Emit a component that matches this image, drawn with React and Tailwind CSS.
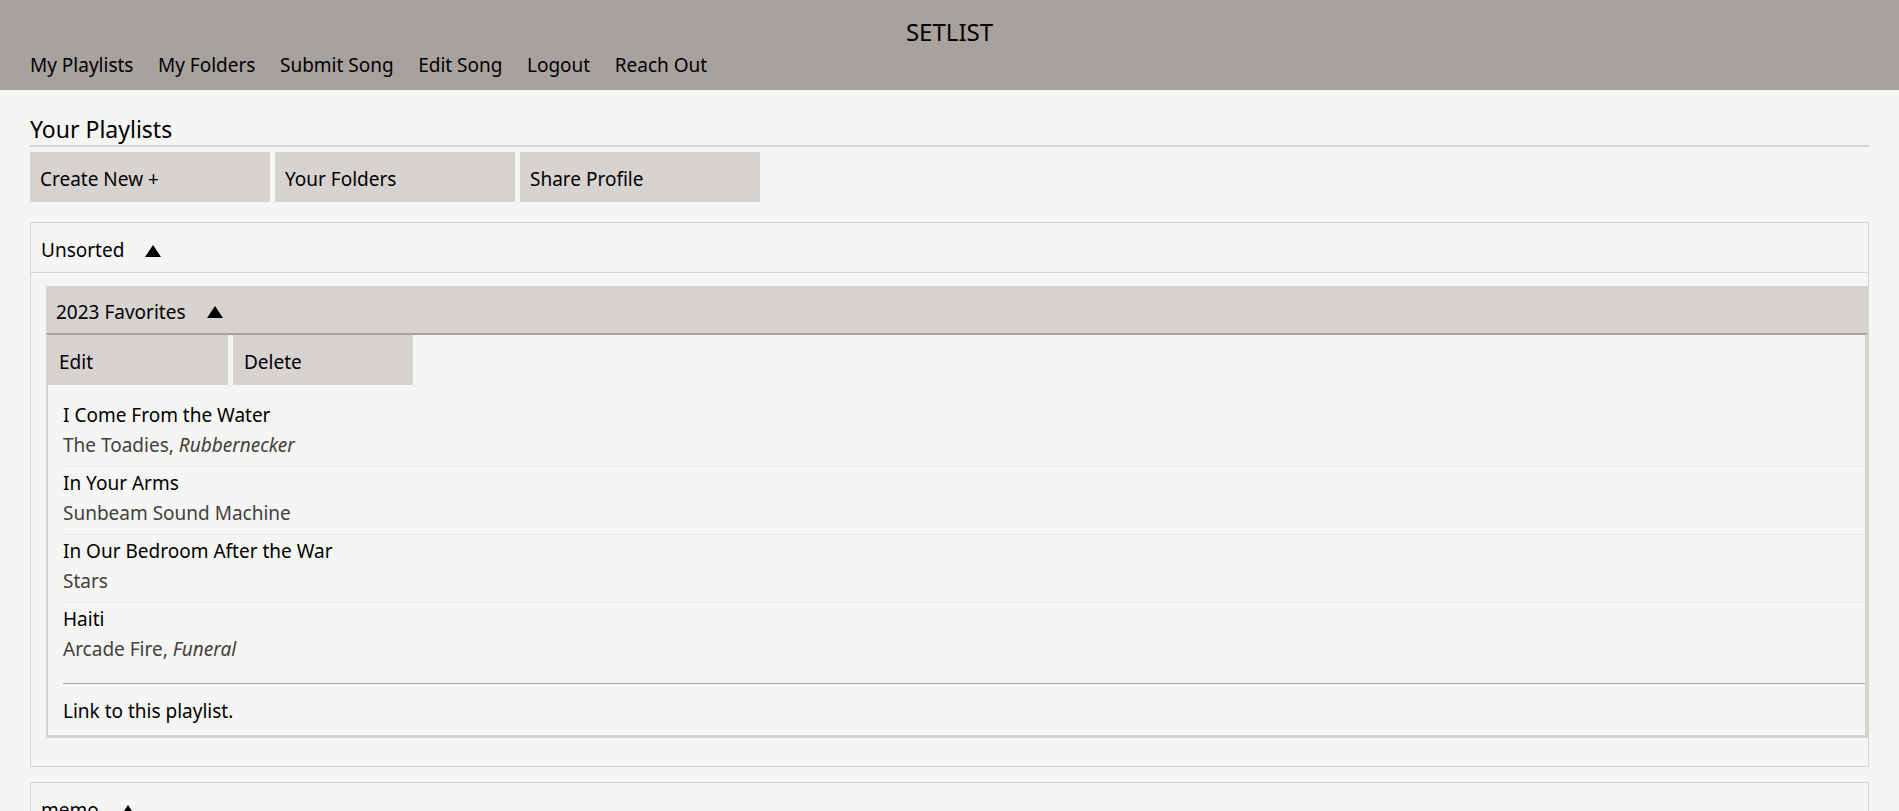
import React from 'react';

const songs = [
    { title: 'I Come From the Water', artist: 'The Toadies', album: 'Rubbernecker' },
    { title: 'In Your Arms', artist: 'Sunbeam Sound Machine' },
    { title: 'In Our Bedroom After the War', artist: 'Stars' },
    { title: 'Haiti', artist: 'Arcade Fire', album: 'Funeral' },
];

const navLinks = ['My Playlists', 'My Folders', 'Submit Song', 'Edit Song', 'Logout', 'Reach Out'];

const Arrow = () => (
    <svg width="16" height="12" viewBox="0 0 16 12" className="ml-[21px] shrink-0">
        <polygon points="8,0 16,12 0,12" fill="#000" />
    </svg>
);

const SongRow = ({ song, last }) => (
    <li className={`pt-[1px] pb-[6px] ${last ? '' : 'border-b border-[#e5e7eb]'}`}>
        <div className="leading-[30px] text-black">{song.title}</div>
        <div className="leading-[30px] text-[#44403c]">
            {song.artist}
            {song.album && (
                <>
                    , <i>{song.album}</i>
                </>
            )}
        </div>
    </li>
);

const Playlist = () => (
    <div>
        <div className="flex items-center h-[47px] pl-[10px] pt-[5px] bg-[#d6d3d1]">
            <span>2023 Favorites</span>
            <Arrow />
        </div>
        <div className="border-t-2 border-t-[#a8a29e] border-l-2 border-r-[3px] border-b-[3px] border-l-[#d6d3d1] border-r-[#d6d3d1] border-b-[#d6d3d1]">
            <div className="flex gap-[5px]">
                <button className="w-[180px] h-[50px] pl-[11px] pt-[4px] text-left bg-[#d6d3d1]">Edit</button>
                <button className="w-[180px] h-[50px] pl-[11px] pt-[4px] text-left bg-[#d6d3d1]">Delete</button>
            </div>
            <ul className="ml-[15px] pt-[14px] pb-[13px]">
                {songs.map((s, i) => (
                    <SongRow key={s.title} song={s} last={i === songs.length - 1} />
                ))}
            </ul>
            <div className="ml-[15px] border-t border-[#a8a29e] pt-[12px] pb-[9px] leading-[30px]">
                Link to this playlist.
            </div>
        </div>
    </div>
);

const Folder = ({ name, children }) => (
    <section className="border border-[#d6d3d1]">
        <div className="flex items-center h-[50px] pl-[10px] pt-[6px] border-b border-[#d6d3d1]">
            <span>{name}</span>
            <Arrow />
        </div>
        {children && <div className="pl-[15px] pt-[13px] pb-[28px]">{children}</div>}
    </section>
);

export default function App() {
    return (
        <div className="min-h-screen bg-[#f5f5f4] text-black text-[19px] font-['Noto_Sans',sans-serif]">
            <header className="h-[90px] bg-[#a8a29e] px-[30px]">
                <div className="pt-[14px] text-center text-[24px] leading-[36px]">SETLIST</div>
                <nav className="flex gap-[24.5px] pt-[1px] leading-[28px]">
                    {navLinks.map(l => (
                        <a key={l} href="#">{l}</a>
                    ))}
                </nav>
            </header>

            <main className="px-[30px]">
                <h2 className="pt-[23px] text-[23px] leading-[32px] border-b-2 border-[#d6d3d1]">
                    Your Playlists
                </h2>
                <div className="flex gap-[5px] mt-[5px]">
                    {['Create New +', 'Your Folders', 'Share Profile'].map(b => (
                        <button key={b} className="w-[240px] h-[50px] pl-[10px] pt-[5px] text-left bg-[#d6d3d1]">
                            {b}
                        </button>
                    ))}
                </div>

                <div className="mt-[20px] flex flex-col gap-[15px]">
                    <Folder name="Unsorted">
                        <Playlist />
                    </Folder>
                    <Folder name="memo" />
                </div>
            </main>
        </div>
    );
}
